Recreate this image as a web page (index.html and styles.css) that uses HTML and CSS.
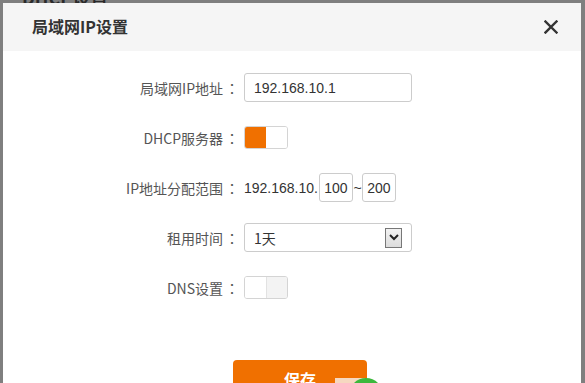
FILE: index.html
```html
<!DOCTYPE html>
<html lang="zh-CN">
<head>
<meta charset="utf-8">
<link rel="stylesheet" href="styles.css">
</head>
<body>
<div class="bgtext">DHCP设置</div>
<div class="dialog">
  <div class="header">
    <span class="title">局域网IP设置</span>
    <svg class="close" width="14" height="14" viewBox="0 0 14 14"><path d="M1.5 1.5 L12.5 12.5 M12.5 1.5 L1.5 12.5" stroke="#333" stroke-width="2.4" stroke-linecap="square"/></svg>
  </div>
  <div class="form">
    <label class="lbl">局域网IP地址<span class="colon">：</span></label>
    <div class="ctl"><div class="input wide">192.168.10.1</div></div>

    <label class="lbl">DHCP服务器<span class="colon">：</span></label>
    <div class="ctl"><div class="toggle on"><span class="half left"></span><span class="half right"></span></div></div>

    <label class="lbl">IP地址分配范围<span class="colon">：</span></label>
    <div class="ctl range">
      <span class="prefix">192.168.10.</span>
      <div class="input small">100</div>
      <span class="tilde">~</span>
      <div class="input small">200</div>
    </div>

    <label class="lbl">租用时间<span class="colon">：</span></label>
    <div class="ctl">
      <div class="input wide select"><span>1天</span>
        <span class="arrow"><svg width="10" height="7" viewBox="0 0 10 7"><path d="M1 1 L5 5 L9 1" fill="none" stroke="#222" stroke-width="2"/></svg></span>
      </div>
    </div>

    <label class="lbl">DNS设置<span class="colon">：</span></label>
    <div class="ctl"><div class="toggle off"><span class="half left"></span><span class="half right"></span></div></div>
  </div>
  <div class="actions">
    <button class="save">保存</button>
    <span class="float-widget"><span class="peach"></span><span class="green"></span></span>
  </div>
</div>
</body>
</html>
```
FILE: styles.css
```css
html, body {
  margin: 0;
  padding: 0;
  height: 100%;
  overflow: hidden;
}
body {
  background: #7f7f7f;
  font-family: "Noto Sans CJK SC", "Noto Sans", sans-serif;
  position: relative;
}
.bgtext {
  position: absolute;
  left: 22px;
  top: -16px;
  font-size: 18px;
  font-weight: bold;
  color: #2a2a2a;
}
.dialog {
  position: relative;
  margin: 3px 4px 0 3px;
  background: #fff;
  height: 380px;
  overflow: hidden;
}
.header {
  height: 48px;
  background: #f5f5f5;
  display: flex;
  align-items: center;
  justify-content: space-between;
  padding: 0 23px 0 29px;
}
.title {
  font-size: 16px;
  font-weight: bold;
  color: #333;
  margin-top: -3px;
}
.close {
  display: block;
}
.form {
  display: grid;
  grid-template-columns: 233px auto;
  grid-auto-rows: 29px;
  row-gap: 21px;
  column-gap: 8px;
  padding-top: 22px;
  font-size: 14px;
}
.lbl {
  color: #555;
  text-align: right;
  align-self: center;
  white-space: nowrap;
  margin-right: -3px;
}
.colon {
  font-family: "Noto Sans CJK TC", sans-serif;
  display: inline-block;
  margin-left: 2px;
}
.ctl {
  display: flex;
  align-items: center;
}
.input {
  box-sizing: border-box;
  height: 29px;
  border: 1px solid #ccc;
  border-radius: 3px;
  display: flex;
  align-items: center;
  color: #333;
  font-family: "Liberation Sans", "Noto Sans CJK SC", sans-serif;
  font-size: 14px;
}
.wide {
  width: 168px;
  padding-left: 9px;
}
.small {
  width: 34px;
  justify-content: center;
}
.range .prefix {
  color: #333;
  font-family: "Liberation Sans", sans-serif;
  margin-right: 1px;
}
.tilde {
  color: #333;
  width: 9px;
  text-align: center;
  font-family: "Liberation Sans", sans-serif;
}
.select {
  justify-content: space-between;
  padding-right: 9px;
}
.select > span:first-child {
  font-family: "Noto Sans CJK SC", sans-serif;
}
.arrow {
  box-sizing: border-box;
  width: 17px;
  height: 20px;
  border: 1px solid #777;
  background: linear-gradient(#f2f2f2, #dcdcdc);
  display: flex;
  align-items: center;
  justify-content: center;
}
.toggle {
  box-sizing: border-box;
  width: 44px;
  height: 23px;
  border: 1px solid #d4d4d4;
  border-radius: 3px;
  display: flex;
  overflow: hidden;
}
.half {
  flex: 1;
}
.toggle.on .left {
  background: #f07000;
}
.toggle.on .right {
  background: #fff;
}
.toggle.off .left {
  background: #fff;
  border-right: 1px solid #e2e2e2;
}
.toggle.off .right {
  background: #f3f3f3;
}
.actions {
  position: relative;
  padding: 58px 0 0 230px;
}
.save {
  width: 134px;
  height: 42px;
  border: 0;
  border-radius: 4px;
  background: #f07000;
  color: #fff;
  font-family: "Noto Sans CJK SC", sans-serif;
  font-size: 16px;
  font-weight: bold;
  padding: 0;
  padding-bottom: 4px;
}
.float-widget {
  position: absolute;
  left: 332px;
  top: 76px;
}
.peach {
  position: absolute;
  left: 0;
  top: 0;
  width: 30px;
  height: 10px;
  background: #f6d8c0;
}
.green {
  position: absolute;
  left: 14px;
  top: 0;
  width: 34px;
  height: 34px;
  border-radius: 50%;
  background: #3cb83c;
}
```
